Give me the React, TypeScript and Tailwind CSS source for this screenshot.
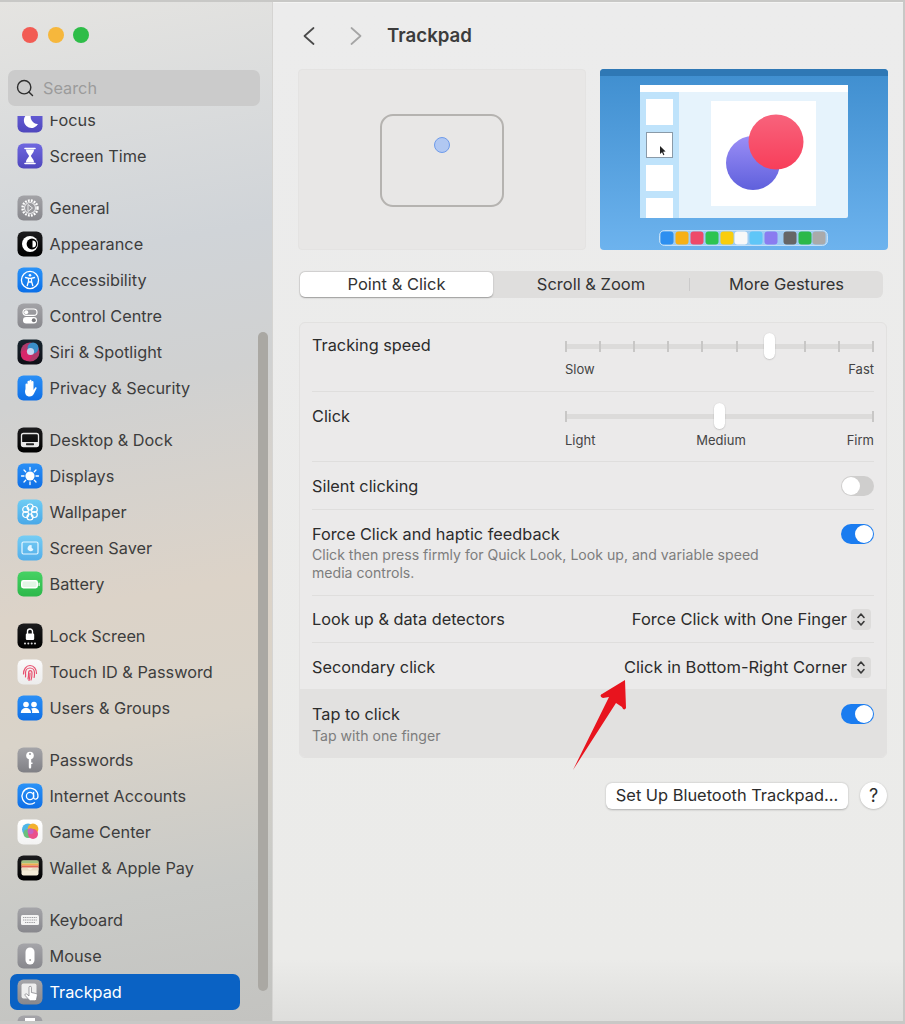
import type { ReactNode } from 'react';
import { Search } from 'lucide-react';

function Tile({ from, to, children }: { from: string; to: string; children?: ReactNode }) {
  const id = `tile-${from.slice(1)}-${to.slice(1)}`;
  return (
    <svg width="26" height="26" viewBox="0 0 26 26" className="shrink-0">
      <defs>
        <linearGradient id={id} x1="0" y1="0" x2="0" y2="1">
          <stop offset="0" stopColor={from} />
          <stop offset="1" stopColor={to} />
        </linearGradient>
      </defs>
      <rect x="0.5" y="0.5" width="25" height="25" rx="6" fill={`url(#${id})`} />
      {children}
    </svg>
  );
}

const icons: Record<string, ReactNode> = {
  focus: (
    <Tile from="#6a63dc" to="#4f47bd">
      <path d="M15 6a7.5 7.5 0 1 0 6 11 7 7 0 0 1-6-11z" fill="#fff" />
    </Tile>
  ),
  screenTime: (
    <Tile from="#6f68e0" to="#4f47bd">
      <path d="M8 5.5h10M8 20.5h10" stroke="#fff" strokeWidth="1.6" strokeLinecap="round" />
      <path d="M9 6.5h8c0 3.5-2.6 4.6-3 6.5.4 1.900 3 3 3 6.500H9c0-3.500 2.600-4.600 3-6.500-.4-1.900-3-3-3-6.500z" fill="#fff" />
    </Tile>
  ),
  general: (
    <Tile from="#a3a3a7" to="#87878c">
      <circle cx="13" cy="13" r="7.500" fill="none" stroke="#fff" strokeWidth="2.400" strokeDasharray="1.800 1.200" />
      <circle cx="13" cy="13" r="5.500" fill="#9a9a9e" stroke="#e8e8ea" strokeWidth="1.100" />
      <path d="M11 9.500l4.500 3.500-4.500 3.500z" fill="none" stroke="#e8e8ea" strokeWidth="1" />
    </Tile>
  ),
  appearance: (
    <Tile from="#1c1c1e" to="#000000">
      <circle cx="13" cy="13" r="8" fill="#fff" />
      <circle cx="15" cy="13" r="5.400" fill="#000" />
      <path d="M15.500 9.500a3.500 3.500 0 0 1 0 7z" fill="#fff" />
    </Tile>
  ),
  accessibility: (
    <Tile from="#2a93f8" to="#0a6fe8">
      <circle cx="13" cy="13" r="8.600" fill="none" stroke="#fff" strokeWidth="1.300" />
      <circle cx="13" cy="8.300" r="1.300" fill="#fff" />
      <path d="M8.500 10.500l3 .8v3l-1.300 4.400M17.500 10.500l-3 .8v3l1.300 4.400M11.500 11.300h3M12 15h2" fill="none" stroke="#fff" strokeWidth="1.300" strokeLinecap="round" />
    </Tile>
  ),
  control: (
    <Tile from="#a3a3a7" to="#88888d">
      <rect x="6" y="6" width="14" height="6.400" rx="3.200" fill="none" stroke="#fff" strokeWidth="1.200" />
      <circle cx="9.200" cy="9.200" r="2" fill="#fff" />
      <rect x="6" y="14" width="14" height="6.400" rx="3.200" fill="#fff" />
      <circle cx="16.800" cy="17.200" r="2" fill="#77777b" />
    </Tile>
  ),
  siri: (
    <Tile from="#17252e" to="#0f0f16">
      <circle cx="13" cy="13" r="9.500" fill="#b03a6b" />
      <circle cx="9.500" cy="16" r="5.500" fill="#d8266b" />
      <circle cx="16" cy="9" r="5.500" fill="#3a8fc8" />
      <circle cx="13.500" cy="12.500" r="3.600" fill="#c8d6f0" />
    </Tile>
  ),
  privacy: (
    <Tile from="#2a8ff6" to="#0f6fe6">
      <path d="M8.500 14V9.500a1 1 0 0 1 2 0V13V6.800a1 1 0 0 1 2 0V12.500V5.800a1 1 0 0 1 2 0V12.500V7a1 1 0 0 1 2 0v8l1.500-2.200c.8-1 2-.2 1.500.8l-2.500 5c-.9 1.900-2.200 2.900-4.400 2.900-3.100 0-4.600-2.200-4.600-5.500z" fill="#fff" />
    </Tile>
  ),
  desktop: (
    <Tile from="#1c1c1e" to="#000000">
      <rect x="4.500" y="6.500" width="17" height="13" rx="2" fill="none" stroke="#e8e8e8" strokeWidth="1.300" />
      <rect x="5" y="15" width="16" height="4.500" fill="#e8e8e8" />
      <rect x="9" y="16.200" width="8" height="2" rx=".6" fill="#222" />
    </Tile>
  ),
  displays: (
    <Tile from="#2a8ff6" to="#0f6fe6">
      <circle cx="13" cy="13" r="4.600" fill="#fff" />
      <path d="M13 4.500v2.500M13 19v2.500M4.500 13H7M19 13h2.500M7 7l1.700 1.700M17.300 17.300L19 19M7 19l1.700-1.700M17.300 8.700L19 7" stroke="#fff" strokeWidth="1.300" strokeLinecap="round" />
    </Tile>
  ),
  wallpaper: (
    <Tile from="#6fcdf4" to="#49a8e8">
      <g fill="none" stroke="#fff" strokeWidth="1.200">
        <circle cx="13" cy="8" r="3" />
        <circle cx="13" cy="18" r="3" />
        <circle cx="8.700" cy="10.500" r="3" />
        <circle cx="17.300" cy="10.500" r="3" />
        <circle cx="8.700" cy="15.500" r="3" />
        <circle cx="17.300" cy="15.500" r="3" />
      </g>
    </Tile>
  ),
  saver: (
    <Tile from="#76cdf4" to="#53aeea">
      <rect x="5" y="7" width="16" height="12" rx="1.500" fill="none" stroke="#e6f6ff" strokeWidth="1.200" />
      <path d="M15 10.500a3 3 0 1 0 1.500 3.600 2.600 2.600 0 0 1-1.500-3.600z" fill="#e6f6ff" />
    </Tile>
  ),
  battery: (
    <Tile from="#46d264" to="#2cb84a">
      <rect x="4" y="9" width="17" height="8.500" rx="2.400" fill="#fff" />
      <rect x="21.500" y="11.500" width="1.200" height="3.500" rx=".6" fill="#fff" />
      <rect x="5.500" y="10.400" width="14" height="5.700" rx="1.400" fill="#e2f6e6" />
    </Tile>
  ),
  lock: (
    <Tile from="#1c1c1e" to="#000000">
      <path d="M10.500 11V8.500a2.500 2.500 0 0 1 5 0V11" fill="none" stroke="#fff" strokeWidth="1.400" />
      <rect x="8.800" y="10.500" width="8.400" height="6.500" rx="1.200" fill="#fff" />
      <circle cx="8" cy="20.500" r="1" fill="#ddd" />
      <circle cx="11.300" cy="20.500" r="1" fill="#ddd" />
      <circle cx="14.700" cy="20.500" r="1" fill="#ddd" />
      <circle cx="18" cy="20.500" r="1" fill="#ddd" />
    </Tile>
  ),
  touch: (
    <Tile from="#fafafa" to="#ececec">
      <g fill="none" stroke="#e8506f" strokeWidth="1.200" strokeLinecap="round">
        <path d="M6.500 15c0-4.500 2.500-8.500 6.500-8.500s6.500 3.500 6.500 8" />
        <path d="M8.500 18c.3-1.500 0-3 0-4 0-2.800 1.800-5 4.500-5s4.500 2.200 4.500 5c0 1.800 0 3-.4 4.500" />
        <path d="M11 20c.5-1.600.6-3.800.6-6 0-1 .5-2.300 1.500-2.300s1.900 1 1.900 2.300c0 2.500-.2 5-1 7" />
        <path d="M13 14c0 2.500-.2 5-1 7.500" />
      </g>
    </Tile>
  ),
  users: (
    <Tile from="#2a8ff6" to="#0f6fe6">
      <circle cx="9" cy="9.500" r="2.800" fill="#fff" />
      <circle cx="17" cy="9.500" r="2.800" fill="#fff" />
      <path d="M3.800 18c0-3 2.200-5 5.200-5s5 2 5 5z" fill="#fff" />
      <path d="M15 18h7.200c0-3-2.200-5-5.200-5-1.200 0-2.200.3-3 .8 1 1 1.500 2.500 1 4.200z" fill="#fff" />
    </Tile>
  ),
  passwords: (
    <Tile from="#a5a5a9" to="#808085">
      <circle cx="13" cy="8.500" r="3.800" fill="#fff" />
      <circle cx="13" cy="7" r="1" fill="#98989c" />
      <path d="M11.800 11h2.400v9.500L13 22l-1.200-1.500zM14 15.500h1.500V17H14z" fill="#fff" />
    </Tile>
  ),
  internet: (
    <Tile from="#2a93f8" to="#0f6fe6">
      <circle cx="13" cy="13" r="3.600" fill="none" stroke="#fff" strokeWidth="1.300" />
      <path d="M16.600 9.500v4.800c0 2.800 4.400 2.500 4.400-1.300a8 8 0 1 0-3.500 6.700" fill="none" stroke="#fff" strokeWidth="1.300" strokeLinecap="round" />
    </Tile>
  ),
  game: (
    <Tile from="#ffffff" to="#f3f3f3">
      <circle cx="11" cy="10.500" r="6" fill="#4fb6e8" />
      <circle cx="16" cy="10" r="5.400" fill="#f3b12d" />
      <circle cx="11" cy="14.500" r="4.600" fill="#6bc07d" />
      <circle cx="16" cy="15" r="5" fill="#ea4f8b" />
      <circle cx="13.500" cy="12.200" r="3" fill="#c860c0" />
    </Tile>
  ),
  wallet: (
    <Tile from="#1c1c1e" to="#000000">
      <rect x="4.500" y="5.500" width="17" height="15" rx="2" fill="#f4ecd8" />
      <rect x="4.500" y="5.500" width="17" height="3" fill="#9fc07e" />
      <rect x="4.500" y="8.500" width="17" height="2" fill="#ecb04e" />
      <rect x="4.500" y="10.500" width="17" height="2" fill="#e0685a" />
      <path d="M4.500 13h6c.5 1.500 1.500 2 2.500 2s2-.5 2.500-2h6v2.500h-17z" fill="#e7dcc2" />
    </Tile>
  ),
  keyboard: (
    <Tile from="#a5a5a9" to="#88888d">
      <rect x="4" y="8" width="18" height="10" rx="1.500" fill="#f4f4f4" />
      <path d="M6 10.500h14M6 13h14M8 15.500h10" stroke="#a0a0a4" strokeWidth="1" strokeDasharray="1.200 .6" />
    </Tile>
  ),
  mouse: (
    <Tile from="#a5a5a9" to="#88888d">
      <rect x="8.500" y="4.500" width="9" height="17" rx="4.500" fill="#fff" />
      <rect x="12.500" y="16" width="1.200" height="2" rx=".6" fill="#888" />
    </Tile>
  ),
  trackpad: (
    <Tile from="#a5a5a9" to="#88888d">
      <rect x="4.500" y="4.500" width="15" height="15" rx="2" fill="#eeeeee" />
      <path d="M12 8.500a1.200 1.200 0 0 1 2.400 0v5l4.600 1c1 .3 1.500 1 1.300 2l-.8 4c-.2.800-.8 1.200-1.600 1.200h-4.300c-.6 0-1.100-.3-1.500-.8L8.200 16.500c-.8-1.100.6-2.300 1.600-1.400l2.200 1.900z" fill="#fff" stroke="#77777c" strokeWidth=".7" />
    </Tile>
  ),
  printers: (
    <Tile from="#a5a5a9" to="#88888d">
      <rect x="8" y="3" width="10" height="8" fill="#fff" />
    </Tile>
  ),
};

const groups: { key: string; label: string }[][] = [
  [
    { key: 'focus', label: 'Focus' },
    { key: 'screenTime', label: 'Screen Time' },
  ],
  [
    { key: 'general', label: 'General' },
    { key: 'appearance', label: 'Appearance' },
    { key: 'accessibility', label: 'Accessibility' },
    { key: 'control', label: 'Control Centre' },
    { key: 'siri', label: 'Siri & Spotlight' },
    { key: 'privacy', label: 'Privacy & Security' },
  ],
  [
    { key: 'desktop', label: 'Desktop & Dock' },
    { key: 'displays', label: 'Displays' },
    { key: 'wallpaper', label: 'Wallpaper' },
    { key: 'saver', label: 'Screen Saver' },
    { key: 'battery', label: 'Battery' },
  ],
  [
    { key: 'lock', label: 'Lock Screen' },
    { key: 'touch', label: 'Touch ID & Password' },
    { key: 'users', label: 'Users & Groups' },
  ],
  [
    { key: 'passwords', label: 'Passwords' },
    { key: 'internet', label: 'Internet Accounts' },
    { key: 'game', label: 'Game Center' },
    { key: 'wallet', label: 'Wallet & Apple Pay' },
  ],
  [
    { key: 'keyboard', label: 'Keyboard' },
    { key: 'mouse', label: 'Mouse' },
    { key: 'trackpad', label: 'Trackpad' },
    { key: 'printers', label: 'Printers & Scanners' },
  ],
];

function Sidebar() {
  return (
    <aside className="relative flex h-full w-[273px] shrink-0 flex-col border-r border-[#d5d4d2] bg-[linear-gradient(170deg,#e5e4e1_0%,#d0d4d8_25%,#d0d1d1_38%,#dcd3c8_58%,#d9d3c9_70%,#c9cac7_86%,#c3c3c0_100%)]">
      <div className="flex gap-[9.500px] pl-[22px] pt-[25px]">
        <span className="h-4 w-4 rounded-full bg-[#f25c54]" />
        <span className="h-4 w-4 rounded-full bg-[#f6b73c]" />
        <span className="h-4 w-4 rounded-full bg-[#2ebd48]" />
      </div>
      <div className="ml-2 mt-[27px] flex h-9 w-[252px] shrink-0 items-center gap-[8.500px] rounded-[7px] bg-[#cbcbcb] pl-[6.500px]">
        <Search size={20} strokeWidth={1.7} className="text-[#2e2e2e]" />
        <span className="text-[16.300px] text-[#9b9b9b]">Search</span>
      </div>
      <div className="mt-[10px] min-h-0 flex-1 overflow-hidden">
        <div className="-mt-[14px] flex flex-col gap-4 pl-[10px]">
          {groups.map((group, i) => (
            <div key={i} className="flex flex-col">
              {group.map((item) => {
                const active = item.key === 'trackpad';
                return (
                  <div
                    key={item.key}
                    className={`flex h-9 w-[230px] items-center gap-[6.500px] rounded-[7px] pl-[7px] text-[16.300px] ${
                      active ? 'bg-[#0a62c4] text-white' : 'text-[#3d3d3d]'
                    }`}
                  >
                    {icons[item.key]}
                    <span>{item.label}</span>
                  </div>
                );
              })}
            </div>
          ))}
        </div>
      </div>
      {/* overlay scrollbar */}
      <div className="absolute right-[4px] top-[330px] h-[659px] w-[10px] rounded-full bg-[#aaa8a3]" />
    </aside>
  );
}

function Preview() {
  const dock = ['#2d8ff0', '#f6b015', '#ee4a6a', '#2dc451', '#f9cd0e', '#f8f8f8', '#5fc6f7', '#8a7cf0', '#666666', '#2cb84a', '#aaaaaa'];
  const dockX = [67, 82, 97, 112, 127, 141, 156, 171, 190, 205, 219];
  return (
    <div className="flex gap-[14px]">
      <div className="flex h-[181px] w-[288px] items-center justify-center rounded-[4px] border border-[#e4e3e2] bg-[#e8e7e6]">
        <div className="mt-[2px] flex h-[93px] w-[124px] justify-center rounded-[13px] border-2 border-[#b5b3b0] pt-[21px]">
          <span className="h-4 w-4 rounded-full border border-[#6e9bea] bg-[#b1c8f2]" />
        </div>
      </div>
      <svg width="288" height="181" viewBox="0 0 288 181" className="rounded-[4px]">
        <defs>
          <linearGradient id="desk" x1="0" y1="0" x2="0" y2="1">
            <stop offset="0" stopColor="#3f8ecf" />
            <stop offset="1" stopColor="#6db3ee" />
          </linearGradient>
          <linearGradient id="purple" x1="0" y1="0" x2="0" y2="1">
            <stop offset="0" stopColor="#9b8ef6" />
            <stop offset="1" stopColor="#5f60dc" />
          </linearGradient>
          <linearGradient id="red" x1="0" y1="0" x2="0" y2="1">
            <stop offset="0" stopColor="#f8637c" />
            <stop offset="1" stopColor="#f83e5a" />
          </linearGradient>
        </defs>
        <rect width="288" height="181" fill="url(#desk)" />
        <rect width="288" height="7" fill="#2f78b5" />
        <rect x="40" y="16" width="208" height="133" rx="2" fill="#e6f3fc" />
        <rect x="40" y="16" width="208" height="7" fill="#ffffff" />
        <rect x="40" y="23" width="39" height="126" fill="#bfe3fb" />
        <rect x="46" y="30" width="27" height="26" fill="#fff" />
        <rect x="46.500" y="63.500" width="26" height="25" fill="#fff" stroke="#8a9aa8" />
        <rect x="46" y="96" width="27" height="26" fill="#fff" />
        <rect x="46" y="129" width="27" height="20" fill="#fff" />
        <path d="M60 77l0 8 2-1.800 1.400 3 1-.5-1.300-2.900 2.500-.2z" fill="#222" />
        <rect x="111" y="32" width="105" height="105" fill="#fff" />
        <circle cx="153" cy="94" r="27" fill="url(#purple)" />
        <circle cx="176" cy="73" r="27.500" fill="url(#red)" />
        <rect x="59.500" y="161.500" width="168" height="15" rx="5" fill="#9fcdf3" stroke="#c4e0f7" />
        {dock.map((c, i) => (
          <rect key={i} x={dockX[i] - 6.500} y="162.500" width="13" height="13" rx="3" fill={c} />
        ))}
      </svg>
    </div>
  );
}

function Tabs() {
  return (
    <div className="ml-px mt-[21px] flex h-[27px] w-[584px] items-center rounded-[6px] bg-[#dfdedd] text-[16.500px] text-[#333333]">
      <div className="ml-px flex h-[25px] w-[193px] items-center justify-center rounded-[5px] bg-white shadow-[0_0.5px_1.500px_rgba(0,0,0,0.3)]">
        Point &amp; Click
      </div>
      <div className="flex w-[196px] justify-center">Scroll &amp; Zoom</div>
      <span className="h-[13px] w-px bg-[#cbcaca]" />
      <div className="flex w-[193px] justify-center">More Gestures</div>
    </div>
  );
}

function Slider({ ticks, thumb, labels, labelGap }: { ticks: number; thumb: number; labels: string[]; labelGap: string }) {
  return (
    <div className="w-[309px]">
      <div className="relative flex h-[26px] items-center justify-between">
        <div className="absolute inset-x-0 top-[10.500px] h-[5px] rounded-full bg-[#dcdbda]" />
        {Array.from({ length: ticks }).map((_, i) => (
          <span key={i} className="relative h-[11px] w-[2px] bg-[#c8c7c6]" />
        ))}
        <span
          className="absolute top-0 h-[26px] w-[11px] rounded-full bg-white shadow-[0_0.5px_1.500px_rgba(0,0,0,0.25)]"
          style={{ left: thumb }}
        />
      </div>
      <div className={`${labelGap} flex justify-between text-[13px] leading-[18px] text-[#444444]`}>
        {labels.map((l) => (
          <span key={l}>{l}</span>
        ))}
      </div>
    </div>
  );
}

function Toggle({ on, className }: { on?: boolean; className?: string }) {
  return (
    <span className={`${className ?? ''} flex h-[20px] w-[33px] shrink-0 items-center rounded-full px-px ${on ? 'justify-end bg-[#1a7cf0]' : 'bg-[#cfcecd]'}`}>
      <span className="h-[18px] w-[18px] rounded-full bg-white" />
    </span>
  );
}

function Stepper() {
  return (
    <span className="ml-[4px] flex h-[21px] w-[20px] items-center justify-center rounded-[4px] bg-[#dddcdb]">
      <svg width="10" height="15" viewBox="0 0 10 15" fill="none" stroke="#3a3a3a" strokeWidth="1.600" strokeLinecap="round" strokeLinejoin="round">
        <path d="M2 5.500L5 2l3 3.500M2 9.500L5 13l3-3.500" />
      </svg>
    </span>
  );
}

function Row({ h, last, children, className }: { h: string; last?: boolean; children: ReactNode; className?: string }) {
  return (
    <div className={`${h} ${className ?? ''} px-[12px]`}>
      <div className={`flex h-full ${last ? '' : 'border-b border-[#dfdedd]'}`}>{children}</div>
    </div>
  );
}

function Settings() {
  return (
    <div className="ml-px mt-[24px] w-[588px] overflow-hidden rounded-[6px] border border-[#e2e1e0] bg-[#ebeaea] text-[16.300px] text-[#2c2c2c]">
      <Row h="h-[69px]">
        <div className="flex w-full items-start justify-between pt-[10px]">
          <span>Tracking speed</span>
          <Slider ticks={10} thumb={199} labels={['Slow', 'Fast']} labelGap="mt-[1px]" />
        </div>
      </Row>
      <Row h="h-[70px]">
        <div className="flex w-full items-start justify-between pt-[11px]">
          <span className="pt-px">Click</span>
          <Slider ticks={2} thumb={149} labels={['Light', 'Medium', 'Firm']} labelGap="mt-[2px]" />
        </div>
      </Row>
      <Row h="h-[48px]">
        <div className="flex w-full items-center justify-between">
          <span className="pt-[2px]">Silent clicking</span>
          <Toggle />
        </div>
      </Row>
      <Row h="h-[86px]">
        <div className="flex w-full items-start justify-between pt-[12px]">
          <div>
            <div>Force Click and haptic feedback</div>
            <p className="w-[470px] text-[14.100px] leading-[18px] text-[#7d7d7d]">
              Click then press firmly for Quick Look, Look up, and variable speed media controls.
            </p>
          </div>
          <Toggle on className="mt-[2px]" />
        </div>
      </Row>
      <Row h="h-[47px]">
        <div className="flex w-full items-center justify-between">
          <span>Look up &amp; data detectors</span>
          <span className="flex items-center pr-[3px] text-[16.500px]">
            Force Click with One Finger
            <Stepper />
          </span>
        </div>
      </Row>
      <Row h="h-[46px]" last>
        <div className="flex w-full items-center justify-between pt-[2px]">
          <span>Secondary click</span>
          <span className="flex items-center pr-[3px] text-[16.500px]">
            Click in Bottom-Right Corner
            <Stepper />
          </span>
        </div>
      </Row>
      <Row h="h-[68px]" last className="bg-[#e2e1e0]">
        <div className="flex w-full items-start justify-between pt-[13px]">
          <div>
            <div>Tap to click</div>
            <p className="mt-px text-[14.100px] leading-[18px] text-[#7d7d7d]">Tap with one finger</p>
          </div>
          <Toggle on className="mt-[2px]" />
        </div>
      </Row>
    </div>
  );
}

export default function App() {
  return (
    <div className="relative h-[1024px] w-[905px] overflow-hidden bg-[#c8c8c6] pb-[3px] pr-[2px] pt-[2px] font-['Inter','Liberation_Sans',sans-serif]">
      <div className="flex h-full min-w-0 overflow-hidden">
        <Sidebar />
        <main className="min-w-0 flex-1 border-t border-[#f4f4f3] bg-[linear-gradient(180deg,#ececec_0%,#ebebe9_94%,#dededc_100%)] pl-[25px]">
          <header className="flex h-[66px] items-center">
            <svg width="12" height="18" viewBox="0 0 12 18" fill="none" stroke="#4a4a4a" strokeWidth="1.700" strokeLinecap="round" strokeLinejoin="round" className="ml-[5px]">
              <path d="M10.500 1L1.500 9l9 8" />
            </svg>
            <svg width="12" height="18" viewBox="0 0 12 18" fill="none" stroke="#a5a5a5" strokeWidth="1.700" strokeLinecap="round" strokeLinejoin="round" className="ml-[35px]">
              <path d="M1.500 1l9 8-9 8" />
            </svg>
            <h1 className="ml-[25px] text-[18.700px] font-semibold text-[#3c3c3c]">Trackpad</h1>
          </header>
          <Preview />
          <Tabs />
          <Settings />
          <div className="ml-px mt-[24px] flex w-[588px] items-center justify-end gap-[12px]">
            <button className="flex h-[26px] w-[242px] items-center justify-center rounded-[6px] bg-white text-[16.400px] text-[#2c2c2c] shadow-[0_0.5px_2px_rgba(0,0,0,0.25)]">
              Set Up Bluetooth Trackpad...
            </button>
            <button className="flex h-[27px] w-[27px] items-center justify-center rounded-full bg-white text-[18px] text-[#2c2c2c] shadow-[0_0.5px_2px_rgba(0,0,0,0.25)]">
              ?
            </button>
          </div>
        </main>
      </div>
      {/* red annotation arrow */}
      <svg width="60" height="100" viewBox="0 0 60 100" className="absolute left-[570px] top-[675px]">
        <path d="M3 95L39 22 33 23C30 22 30 20 32 19L55 5 56 33C55 35 53 35 52 32L46 28z" fill="#e8141e" />
      </svg>
    </div>
  );
}
